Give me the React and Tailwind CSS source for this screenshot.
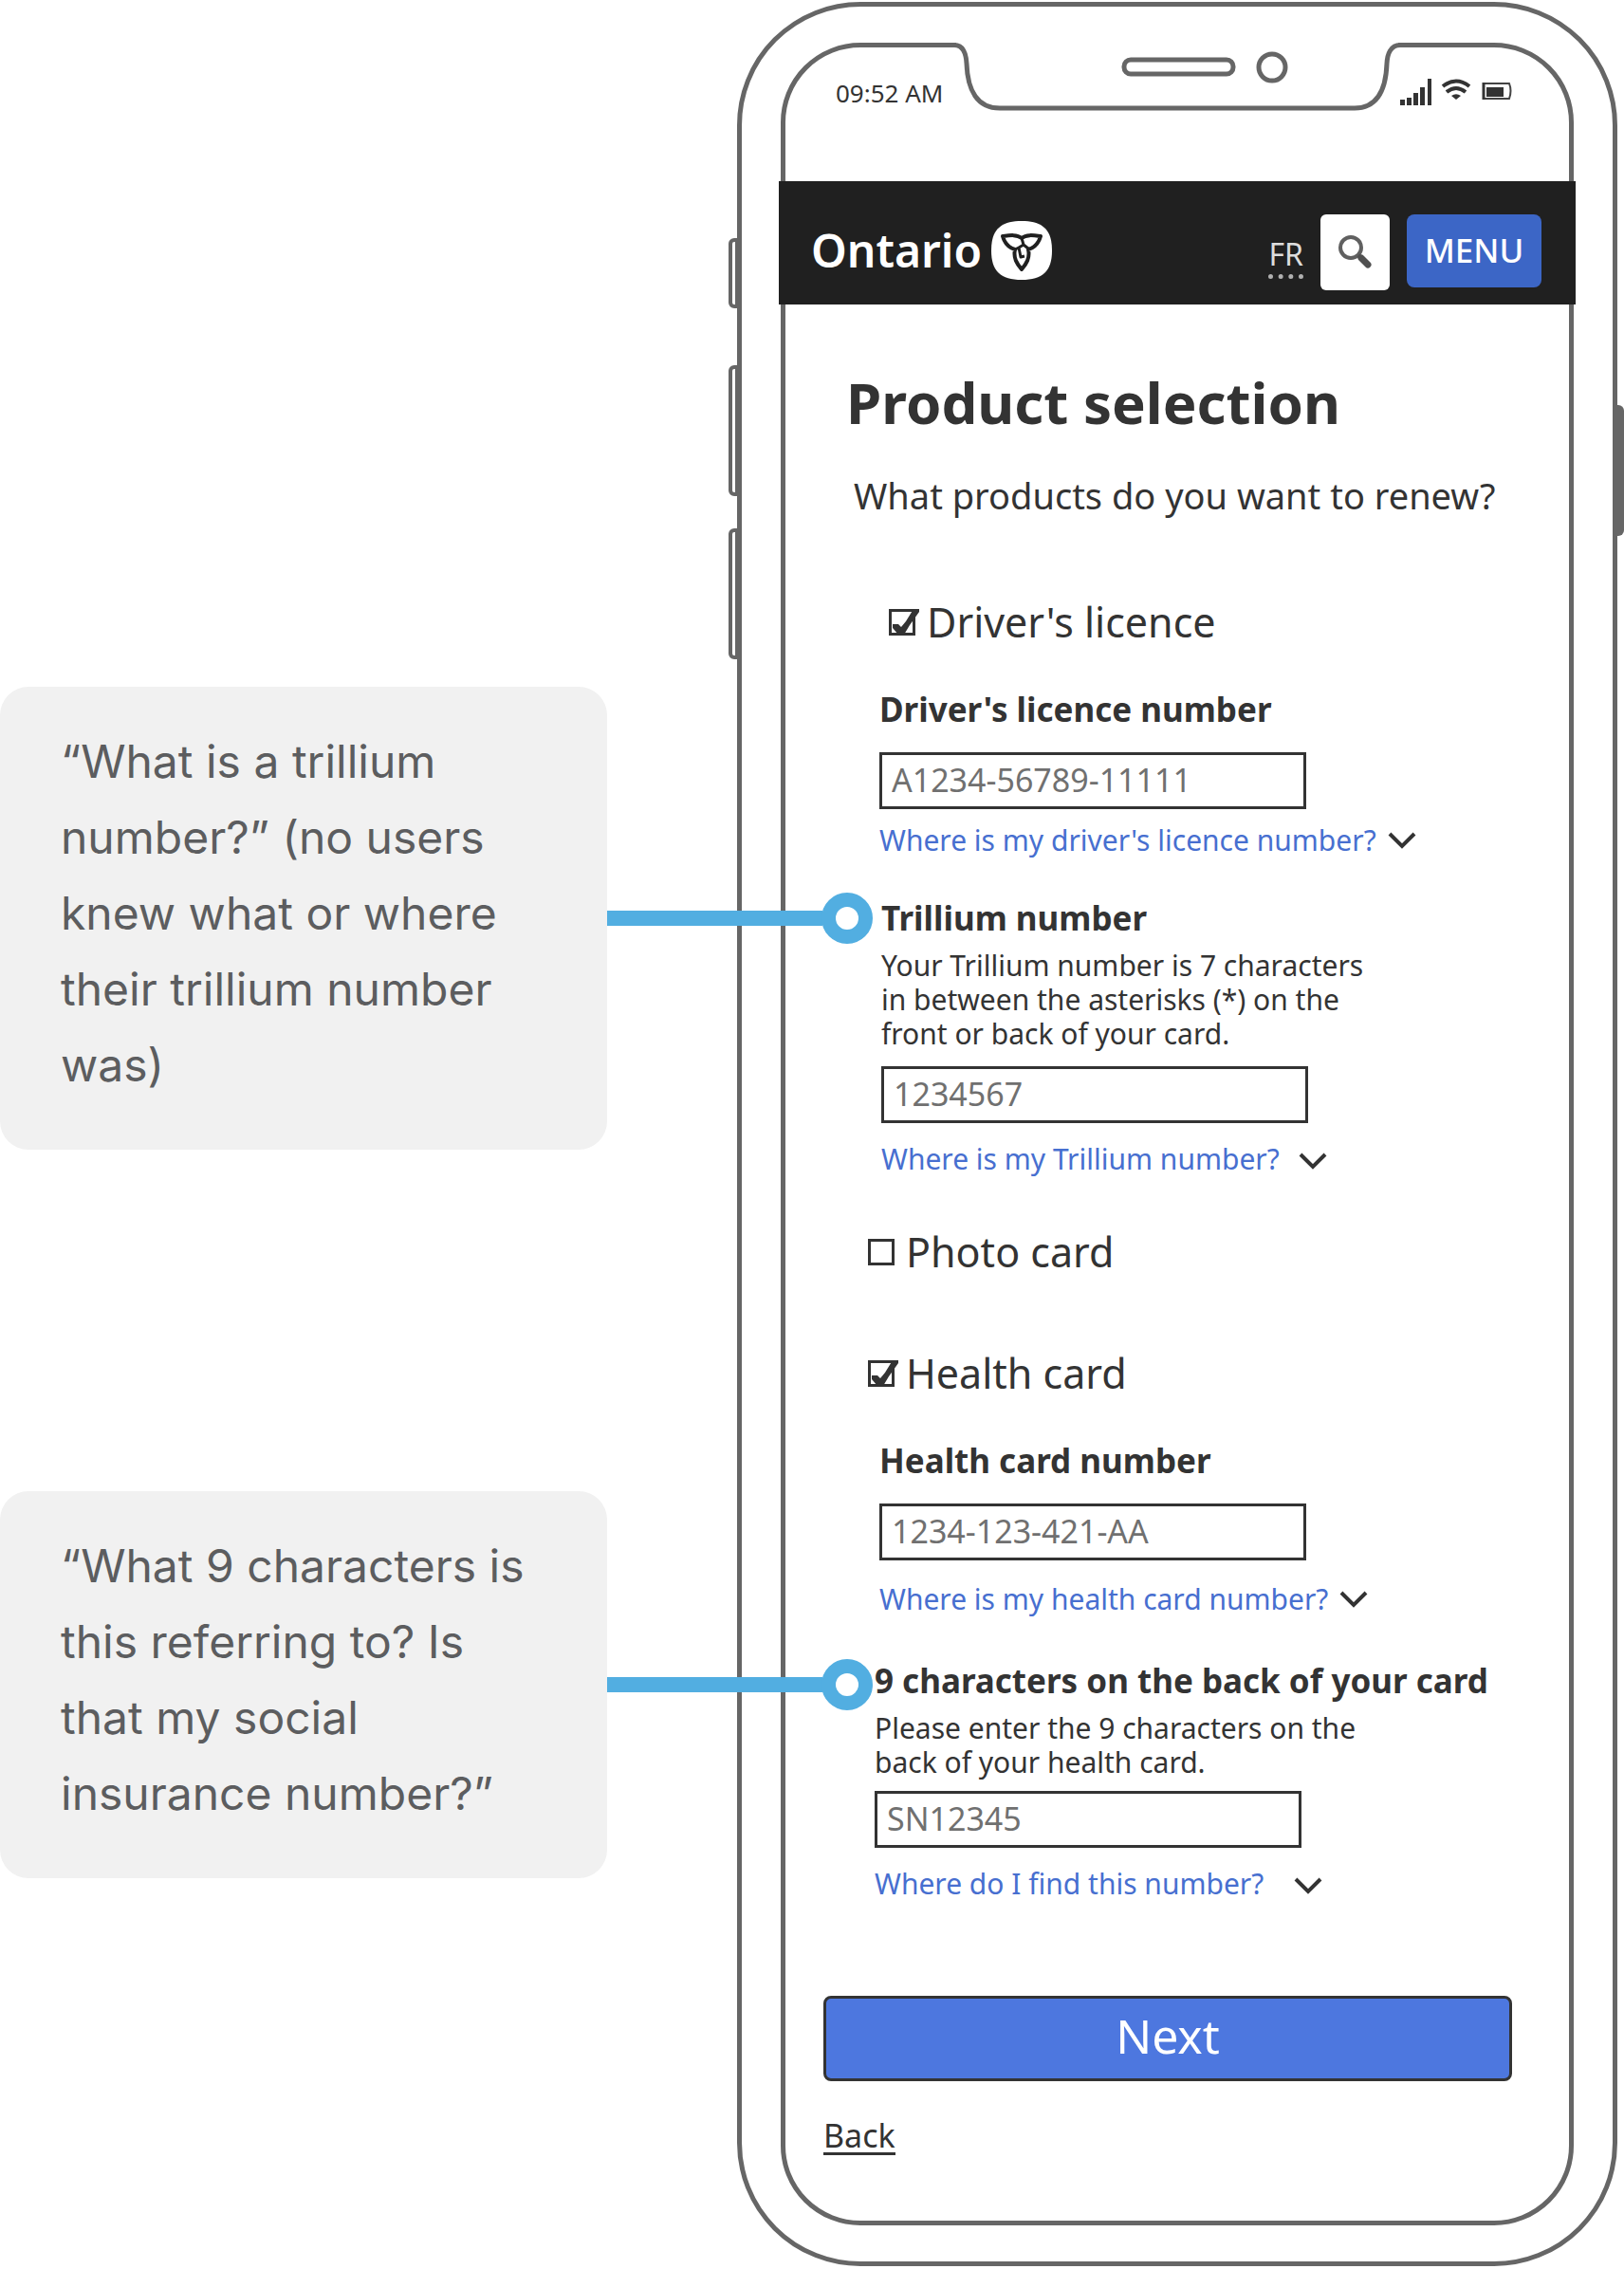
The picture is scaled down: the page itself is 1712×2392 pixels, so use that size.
import { useState } from 'react';

const Chevron = () => (
  <svg width="30" height="18" viewBox="0 0 30 18" fill="none" aria-hidden="true">
    <path d="M2 2 L15 15 L28 2" stroke="#333333" strokeWidth="4" />
  </svg>
);

const Notch = () => (
  <svg width="482" height="74" viewBox="0 0 482 74" fill="none" aria-hidden="true">
    <rect x="8" y="0" width="466" height="8" fill="#ffffff" />
    <path
      d="M0 2.5 H6 C16 2.5 18.5 12 19 22 C20 50 30 69 54 69 H428 C452 69 461 50 462 22 C462.500 12 466 2.500 476 2.500 H482"
      stroke="#666666"
      strokeWidth="5"
    />
    <rect x="185" y="18" width="115" height="15" rx="7" stroke="#666666" strokeWidth="5" />
    <circle cx="341" cy="26" r="14" stroke="#666666" strokeWidth="5" />
  </svg>
);

const StatusIcons = () => (
  <svg width="118" height="30" viewBox="0 0 118 30" fill="none" aria-hidden="true">
    <g fill="#333333">
      <rect x="0" y="23" width="5" height="6" />
      <rect x="7" y="21" width="5" height="8" />
      <rect x="14" y="16" width="5" height="13" />
      <rect x="21" y="10" width="5" height="19" />
      <rect x="29" y="1" width="4" height="28" />
      <path d="M59 23 L54 19 Q59 15.500 64 19 Z" />
      <rect x="91" y="10" width="18" height="10" />
    </g>
    <g stroke="#333333" strokeWidth="4">
      <path d="M45 9 Q59 -2 73 9" />
      <path d="M49 15 Q59 7 69 15" />
    </g>
    <path d="M88 6 H115 Q118 13.500 115 22 H88 Z" stroke="#444444" strokeWidth="2" />
    <path d="M88 5 V23" stroke="#333333" strokeWidth="3" />
  </svg>
);

const Trillium = () => (
  <svg width="64" height="62" viewBox="0 0 64 62" fill="none" aria-hidden="true">
    <path
      d="M32 0 C54 0 64 9 64 31 C64 53 54 62 32 62 C10 62 0 53 0 31 C0 9 10 0 32 0 Z"
      fill="#ffffff"
    />
    <g stroke="#202020" strokeWidth="4" strokeLinejoin="round">
      <path d="M32 18 C27 14 20 15 12 16 C14 23 18 28 25 30 C23 39 27 45 32 51 C37 45 41 39 39 30 C46 28 50 23 52 16 C44 15 37 14 32 18 Z" />
      <path d="M32 18 L34 25 L29 28 L25 30 M29 28 L31 38 L35 37 M34 25 L39 29" strokeWidth="3" />
    </g>
  </svg>
);

const SearchIcon = () => (
  <svg width="38" height="38" viewBox="0 0 38 38" fill="none" aria-hidden="true">
    <circle cx="14" cy="14" r="11" stroke="#606060" strokeWidth="4" />
    <path d="M22 22 L25 25" stroke="#505050" strokeWidth="4" />
    <path d="M25 25 L32 32" stroke="#505050" strokeWidth="7" strokeLinecap="round" />
  </svg>
);

const ProductCheckbox = ({ id, label, checked, onChange, className }) => (
  <div className={`flex items-center gap-3 ${className}`}>
    <span className="relative flex">
      <input
        id={id}
        type="checkbox"
        checked={checked}
        onChange={onChange}
        className="h-7 w-7 appearance-none border-3 border-[#333333] bg-white"
      />
      {checked && (
        <svg
          className="pointer-events-none absolute left-0 top-0"
          width="33"
          height="28"
          viewBox="0 0 33 28"
          fill="none"
          aria-hidden="true"
        >
          <path d="M4 16 L10 16 L13 19 L18 13 L26 0 H32 V3 L22 17 L16 27 H10 L4 20 Z" fill="#333333" />
        </svg>
      )}
    </span>
    <label htmlFor={id} className="text-[43px] leading-[56px]">
      {label}
    </label>
  </div>
);

const NumberField = ({ id, label, hint, placeholder, help, className, inputClass, helpClass }) => (
  <div className={className}>
    <label htmlFor={id} className="block text-[35px] font-bold leading-[44px]">
      {label}
    </label>
    {hint && <p className="mt-2.5 w-[530px] text-[30px] leading-[36px]">{hint}</p>}
    <input
      id={id}
      type="text"
      placeholder={placeholder}
      className={`block h-[60px] w-[450px] border-3 border-[#333333] px-2.5 pb-0.5 text-[34px] text-[#333333] placeholder:text-[#707070] ${inputClass}`}
    />
    <a href="#" className={`flex text-[30px] leading-[36px] text-[#476fd0] ${helpClass}`}>
      {help} <Chevron />
    </a>
  </div>
);

// Quote card with a line that points at the part of the form it is about
const Callout = ({ children, className }) => (
  <div className={`relative rounded-[30px] bg-[#f1f1f1] px-16 pb-[49px] pt-[39px] ${className}`}>
    <p className="text-[48px] leading-[80px] text-[#5c5d5f]">{children}</p>
    <div className="absolute left-full top-1/2 z-10 flex w-[280px] -translate-y-1/2 items-center">
      <div className="h-4 flex-1 bg-[#52aee1]" />
      <div className="-ml-px h-[54px] w-[54px] rounded-full border-[15px] border-[#52aee1] bg-white" />
    </div>
  </div>
);

const Phone = ({ children }) => (
  <div className="relative rounded-[130px] border-5 border-[#666666] bg-white px-[41px] py-[38px]">
    <div className="absolute -left-[14px] top-[244px] h-[74px] w-[11px] rounded-l-md border-4 border-[#666666]" />
    <div className="absolute -left-[14px] top-[378px] h-[138px] w-[11px] rounded-l-md border-4 border-[#666666]" />
    <div className="absolute -left-[14px] top-[550px] h-[138px] w-[11px] rounded-l-md border-4 border-[#666666]" />
    <div className="absolute -right-[12px] top-[420px] h-[138px] w-[9px] rounded-r-md bg-[#666666]" />
    <div className="relative rounded-[84px] border-5 border-[#666666]">
      <div className="absolute -top-[5px] left-1/2 -translate-x-1/2">
        <Notch />
      </div>
      {children}
    </div>
  </div>
);

const App = () => {
  const [selected, setSelected] = useState({ driver: true, photo: false, health: true });

  const toggle = (key) => setSelected({ ...selected, [key]: !selected[key] });

  return (
    <div className="flex bg-white font-['Noto_Sans','Open_Sans',sans-serif] text-[#333333]">
      {/* Research quotes */}
      <aside className="w-[640px] shrink-0 pt-[724px] font-['Inter',sans-serif]">
        <Callout>“What is a trillium number?” (no users knew what or where their trillium number was)</Callout>
        <Callout className="mt-[360px]">
          “What 9 characters is this referring to? Is that my social insurance number?”
        </Callout>
      </aside>

      <div className="ml-[137px] mr-[7px] flex-1 py-0.5">
        <Phone>
          <div className="flex h-[141px] items-start justify-between pl-[53px] pr-[60px] pt-8">
            <span className="text-[26px] leading-[32px]">09:52 AM</span>
            <StatusIcons />
          </div>

          <header className="relative -mx-[7px] flex h-[130px] items-center bg-[#202020] pl-[34px] pr-9 pt-4 text-white">
            <a href="#" className="flex items-center gap-2.5">
              <span className="text-[48px] font-semibold leading-[56px]">Ontario</span>
              <Trillium />
            </a>
            <a
              href="#"
              className="ml-auto mt-3 border-b-5 border-dotted border-[#b0b0b0] text-[32px] leading-[42px] text-[#dddddd]"
            >
              FR
            </a>
            <button
              type="button"
              aria-label="Search"
              className="ml-[18px] mt-1 flex h-20 w-[73px] items-center justify-center rounded-md bg-white"
            >
              <SearchIcon />
            </button>
            <button
              type="button"
              className="ml-[18px] h-[77px] w-[142px] rounded-lg bg-[#3c66c6] text-[35px] font-medium"
            >
              MENU
            </button>
          </header>

          <main className="pb-[69px] pl-10 pr-[60px] pt-[67px]">
            <h1 className="pl-6 text-[60px] font-bold leading-[72px]">Product selection</h1>
            <p className="mt-9 pl-8 text-[38px] leading-[52px]">What products do you want to renew?</p>

            <ProductCheckbox
              id="driver"
              label="Driver's licence"
              checked={selected.driver}
              onChange={() => toggle('driver')}
              className="mt-20 pl-[69px]"
            />
            <NumberField
              id="driver-number"
              label="Driver's licence number"
              placeholder="A1234-56789-11111"
              help="Where is my driver's licence number?"
              className="mt-[42px] pl-[59px]"
              inputClass="mt-[23px]"
              helpClass="mt-[15px] items-center gap-3"
            />
            <NumberField
              id="trillium-number"
              label="Trillium number"
              hint="Your Trillium number is 7 characters in between the asterisks (*) on the front or back of your card."
              placeholder="1234567"
              help="Where is my Trillium number?"
              className="mt-[42px] pl-[61px]"
              inputClass="mt-4"
              helpClass="mt-5 items-baseline gap-5"
            />

            <ProductCheckbox
              id="photo"
              label="Photo card"
              checked={selected.photo}
              onChange={() => toggle('photo')}
              className="mt-[52px] pl-[47px]"
            />

            <ProductCheckbox
              id="health"
              label="Health card"
              checked={selected.health}
              onChange={() => toggle('health')}
              className="mt-[72px] pl-[47px]"
            />
            <NumberField
              id="health-number"
              label="Health card number"
              placeholder="1234-123-421-AA"
              help="Where is my health card number?"
              className="mt-[42px] pl-[59px]"
              inputClass="mt-[23px]"
              helpClass="mt-[23px] items-center gap-3"
            />
            <NumberField
              id="back-characters"
              label="9 characters on the back of your card"
              hint="Please enter the 9 characters on the back of your health card."
              placeholder="SN12345"
              help="Where do I find this number?"
              className="mt-[46px] pl-[54px]"
              inputClass="mt-3"
              helpClass="mt-5 items-baseline gap-8"
            />

            <button
              type="button"
              className="mt-[100px] block h-[90px] w-full rounded-lg border-3 border-[#333333] bg-[#4d77df] pb-1.5 text-[50px] leading-[60px] text-white"
            >
              Next
            </button>
            <a href="#" className="mt-[39px] inline-block border-b-3 border-[#333333] text-[34px] leading-[36px]">
              Back
            </a>
          </main>
        </Phone>
      </div>
    </div>
  );
};

export default App;
